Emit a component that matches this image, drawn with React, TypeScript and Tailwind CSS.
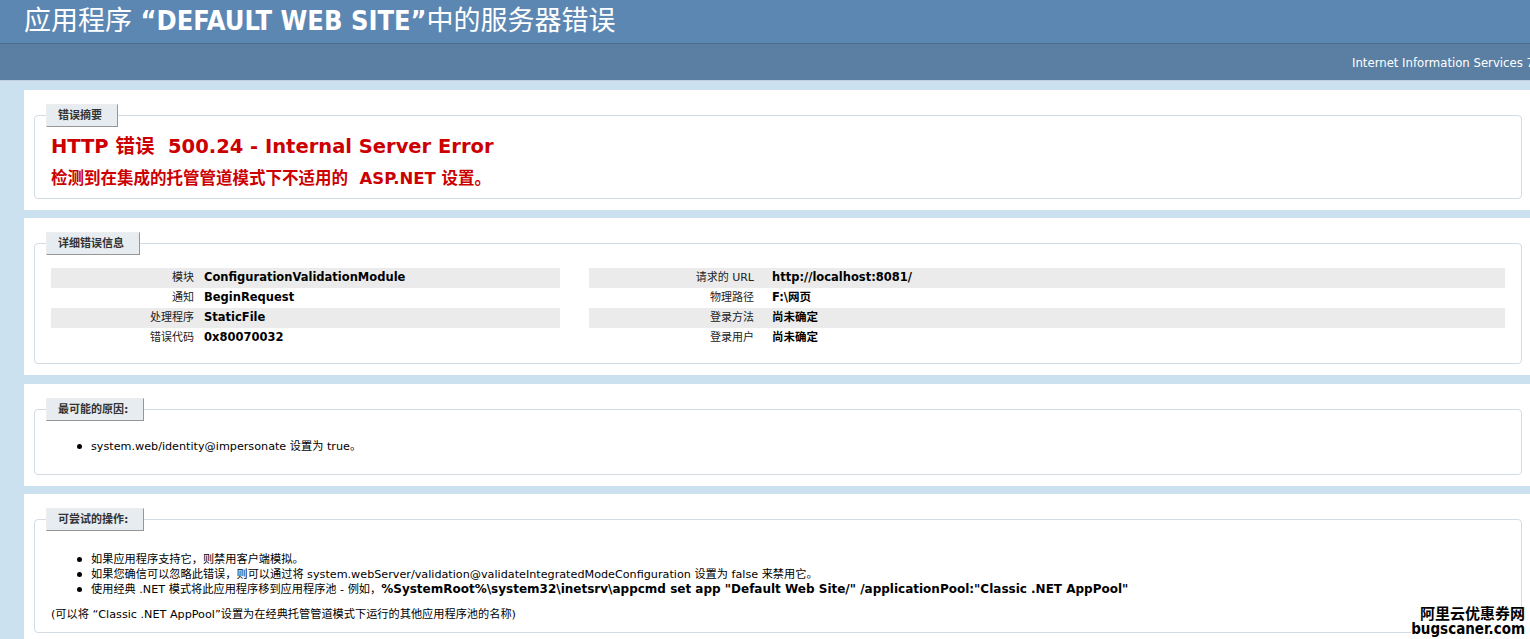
import React from "react";

const detailsLeft = [
  ["模块", "ConfigurationValidationModule"],
  ["通知", "BeginRequest"],
  ["处理程序", "StaticFile"],
  ["错误代码", "0x80070032"],
];

const detailsRight = [
  ["请求的 URL", "http://localhost:8081/"],
  ["物理路径", "F:\\网页"],
  ["登录方法", "尚未确定"],
  ["登录用户", "尚未确定"],
];

function Panel({
  legend,
  className = "",
  children,
}: {
  legend: string;
  className?: string;
  children: React.ReactNode;
}) {
  return (
    <div className={`ml-[24px] bg-white pt-[14px] pl-[10px] pr-[8px] ${className}`}>
      <fieldset className="rounded-[4px] border border-[#d3dbe3] px-[16px]">
        <legend className="-ml-[5px] border border-t-[#ededed] border-l-[#ededed] border-r-[#969696] border-b-[#969696] bg-[#e7ecf0] pl-[11px] pr-[15px] text-[11px] leading-[21px] font-bold text-[#333333]">
          {legend}
        </legend>
        {children}
      </fieldset>
    </div>
  );
}

function DetailTable({
  rows,
  labelWidth,
  gap,
  className,
}: {
  rows: string[][];
  labelWidth: string;
  gap: string;
  className: string;
}) {
  return (
    <div className={className}>
      {rows.map(([label, value], idx) => (
        <div key={idx} className={`flex h-[20px] items-center ${idx % 2 === 0 ? "bg-[#ebebeb]" : ""}`}>
          <span className={`${labelWidth} shrink-0 text-right text-[11px] text-[#222]`}>{label}</span>
          <span className={`${gap} text-[11.5px] font-bold text-black`}>{value}</span>
        </div>
      ))}
    </div>
  );
}

function Item({ children }: { children: React.ReactNode }) {
  return (
    <li className="flex items-start">
      <span className="flex h-[15px] w-[14px] shrink-0 items-center">
        <span className="h-[5px] w-[5px] rounded-full bg-black" />
      </span>
      <span>{children}</span>
    </li>
  );
}

export default function App() {
  return (
    <div className="relative min-h-screen w-full overflow-hidden bg-[#cbe1ef] font-['DejaVu_Sans','Noto_Sans_CJK_SC',sans-serif] text-black">
      {/* header */}
      <div className="h-[43px] bg-[#5c87b2] pl-[24px] pt-[5px]">
        <h1 className="whitespace-nowrap text-[27px] leading-[32px] text-white">
          应用程序 <span className="font-['DejaVu_Sans_Condensed'] font-bold">“DEFAULT WEB SITE”</span>中的服务器错误
        </h1>
      </div>
      <div className="h-[38px] border-t border-b border-t-[#4a6c8e] border-b-[#c1cfdd] bg-[#5a7fa3] pl-[1352px] pt-[11px] whitespace-nowrap text-[11.7px] text-white">
        Internet Information Services 7.5
      </div>

      {/* summary */}
      <Panel legend="错误摘要" className="mt-[9px] pb-[11px]">
        <h3 className="mt-[8px] whitespace-pre text-[19.5px] leading-[24px] font-bold text-[#cc0000]">
          {"HTTP 错误  500.24 - Internal Server Error"}
        </h3>
        <h4 className="mt-[10px] mb-[9px] whitespace-pre text-[16.5px] leading-[20px] font-bold text-[#cc0000]">
          {"检测到在集成的托管管道模式下不适用的  ASP.NET 设置。"}
        </h4>
      </Panel>

      {/* details */}
      <Panel legend="详细错误信息" className="mt-[8px] pb-[11px]">
        <div className="mt-[13px] mb-[15px] flex">
          <DetailTable rows={detailsLeft} labelWidth="w-[143px]" gap="ml-[10px]" className="mr-[2%] w-[35%]" />
          <DetailTable rows={detailsRight} labelWidth="w-[165px]" gap="ml-[18px]" className="w-[63%]" />
        </div>
      </Panel>

      {/* cause */}
      <Panel legend="最可能的原因:" className="mt-[9px] pb-[11px]">
        <ul className="mt-[18px] mb-[20px] pl-[26px] text-[11.2px] leading-[15px]">
          <Item>{"system.web/identity@impersonate 设置为  true。"}</Item>
        </ul>
      </Panel>

      {/* actions */}
      <Panel legend="可尝试的操作:" className="mt-[8px] pb-[11px]">
        <ul className="mt-[21px] mb-[10px] pl-[26px] text-[11.2px] leading-[15px]">
          <Item>如果应用程序支持它，则禁用客户端模拟。</Item>
          <Item>
            如果您确信可以忽略此错误，则可以通过将 system.webServer/validation@validateIntegratedModeConfiguration 设置为 false 来禁用它。
          </Item>
          <Item>
            使用经典 .NET 模式将此应用程序移到应用程序池 - 例如，
            <span className="text-[12px] font-bold">
              %SystemRoot%\system32\inetsrv\appcmd set app "Default Web Site/" /applicationPool:"Classic .NET AppPool"
            </span>
          </Item>
        </ul>
        <p className="mb-[10px] text-[11.2px] leading-[15px]">
          (可以将 “Classic .NET AppPool”设置为在经典托管管道模式下运行的其他应用程序池的名称)
        </p>
      </Panel>

      {/* watermark */}
      <div className="absolute right-[5px] bottom-[7px] bg-white text-right font-['DejaVu_Sans_Condensed','Noto_Sans_CJK_SC',sans-serif] text-[15px] leading-[15px] font-bold text-black">
        <div>阿里云优惠券网</div>
        <div>bugscaner.com</div>
      </div>
    </div>
  );
}
